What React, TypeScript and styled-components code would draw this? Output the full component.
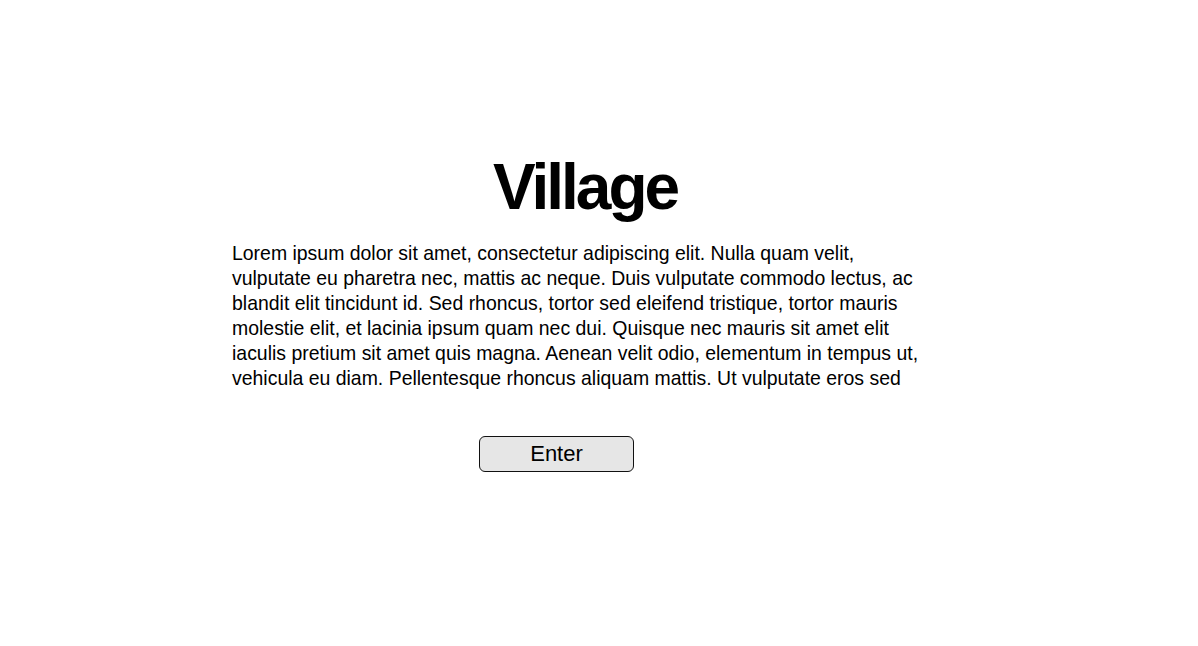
import React from "react";
import styled, { createGlobalStyle } from "styled-components";

const Global = createGlobalStyle`
  html, body {
    margin: 0;
    padding: 0;
    background: #ffffff;
  }
  body {
    font-family: "Liberation Sans", Arial, Helvetica, sans-serif;
    color: #000;
  }
`;

const Page = styled.main`
  min-height: 646px;
  box-sizing: border-box;
  padding: 150px 0 0 232px;
`;

const Content = styled.section`
  width: 706px;
  display: flex;
  flex-direction: column;
`;

const Title = styled.h1`
  margin: 0;
  font-size: 64px;
  font-weight: 700;
  letter-spacing: -3px;
  text-align: center;
  line-height: normal;
`;

const Body = styled.p`
  margin: 17px 0 0;
  font-size: 19.45px;
  line-height: 25px;
`;

const EnterButton = styled.button`
  margin: 45px 0 0 247px;
  width: 155px;
  height: 36px;
  box-sizing: border-box;
  border: 1.5px solid #111;
  border-radius: 6px;
  background: #e6e6e6;
  font-family: "Liberation Sans", Arial, sans-serif;
  font-size: 22px;
  color: #000;
  padding: 0;
  line-height: 1;
`;

export default function App() {
  return (
    <>
      <Global />
      <Page>
        <Content>
          <Title>Village</Title>
          <Body>
            Lorem ipsum dolor sit amet, consectetur adipiscing elit. Nulla quam velit,
            vulputate eu pharetra nec, mattis ac neque. Duis vulputate commodo lectus, ac
            blandit elit tincidunt id. Sed rhoncus, tortor sed eleifend tristique, tortor mauris
            molestie elit, et lacinia ipsum quam nec dui. Quisque nec mauris sit amet elit
            iaculis pretium sit amet quis magna. Aenean velit odio, elementum in tempus ut,
            vehicula eu diam. Pellentesque rhoncus aliquam mattis. Ut vulputate eros sed
          </Body>
          <EnterButton>Enter</EnterButton>
        </Content>
      </Page>
    </>
  );
}
